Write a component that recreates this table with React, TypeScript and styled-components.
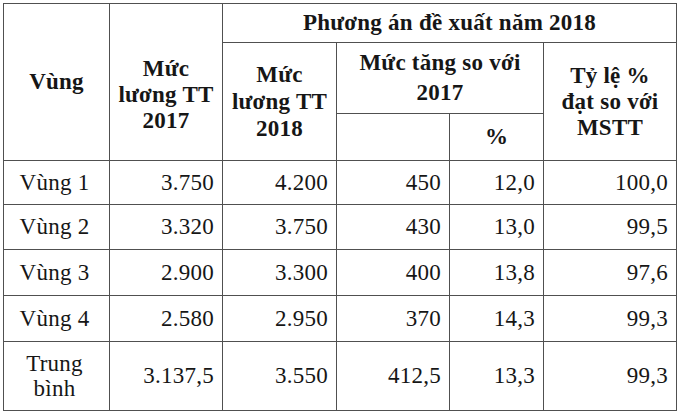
import { createGlobalStyle } from 'styled-components'
import styled from 'styled-components'

const GlobalStyle = createGlobalStyle`
  html, body {
    margin: 0;
    padding: 0;
    background: #ffffff;
  }
  body {
    width: 680px;
    height: 416px;
    overflow: hidden;
  }
`

const Page = styled.div`
  padding: 3px 0 0 3px;
  font-family: "Liberation Serif", "Times New Roman", serif;
  color: #161616;
`

const Table = styled.table`
  border-collapse: collapse;
  table-layout: fixed;
  width: 673px;
  font-size: 23px;
  letter-spacing: 0.25px;
`

const Row = styled.tr<{ $h: number }>`
  height: ${p => p.$h}px;
`

const Th = styled.th<{ $lh?: number; $pt?: number }>`
  border: 1px solid #505050;
  font-weight: bold;
  text-align: center;
  vertical-align: middle;
  line-height: ${p => p.$lh ?? 26}px;
  padding: ${p => p.$pt ?? 0}px 2px 0;
`

const Td = styled.td<{ $center?: boolean; $lh?: number }>`
  border: 1px solid #505050;
  text-align: ${p => (p.$center ? 'center' : 'right')};
  vertical-align: middle;
  line-height: ${p => p.$lh ?? 26}px;
  padding: 0 8px 0 4px;
`

type DataRow = {
  name: string
  wrap?: boolean
  h: number
  values: string[]
}

const rows: DataRow[] = [
  { name: 'Vùng 1', h: 44, values: ['3.750', '4.200', '450', '12,0', '100,0'] },
  { name: 'Vùng 2', h: 45, values: ['3.320', '3.750', '430', '13,0', '99,5'] },
  { name: 'Vùng 3', h: 46, values: ['2.900', '3.300', '400', '13,8', '97,6'] },
  { name: 'Vùng 4', h: 46, values: ['2.580', '2.950', '370', '14,3', '99,3'] },
  { name: 'Trung bình', wrap: true, h: 69, values: ['3.137,5', '3.550', '412,5', '13,3', '99,3'] },
]

const widths = [106, 113, 114, 113, 94, 133]

export default function App() {
  return (
    <Page>
      <GlobalStyle />
      <Table>
        <colgroup>
          {widths.map((w, i) => <col key={i} style={{ width: w }} />)}
        </colgroup>
        <thead>
          <Row $h={39}>
            <Th rowSpan={3}>Vùng</Th>
            <Th rowSpan={3} $pt={26}>Mức<br />lương TT<br />2017</Th>
            <Th colSpan={4}>Phương án đề xuất năm 2018</Th>
          </Row>
          <Row $h={71}>
            <Th rowSpan={2} $lh={27}>Mức<br />lương TT<br />2018</Th>
            <Th colSpan={2} $lh={30}>Mức tăng so với<br />2017</Th>
            <Th rowSpan={2}>Tỷ lệ %<br />đạt so với<br />MSTT</Th>
          </Row>
          <Row $h={47}>
            <Th></Th>
            <Th>%</Th>
          </Row>
        </thead>
        <tbody>
          {rows.map(r => (
            <Row key={r.name} $h={r.h}>
              <Td $center $lh={r.wrap ? 25 : 26}>
                {r.wrap ? <>Trung<br />bình</> : r.name}
              </Td>
              {r.values.map((v, i) => <Td key={i}>{v}</Td>)}
            </Row>
          ))}
        </tbody>
      </Table>
    </Page>
  )
}
